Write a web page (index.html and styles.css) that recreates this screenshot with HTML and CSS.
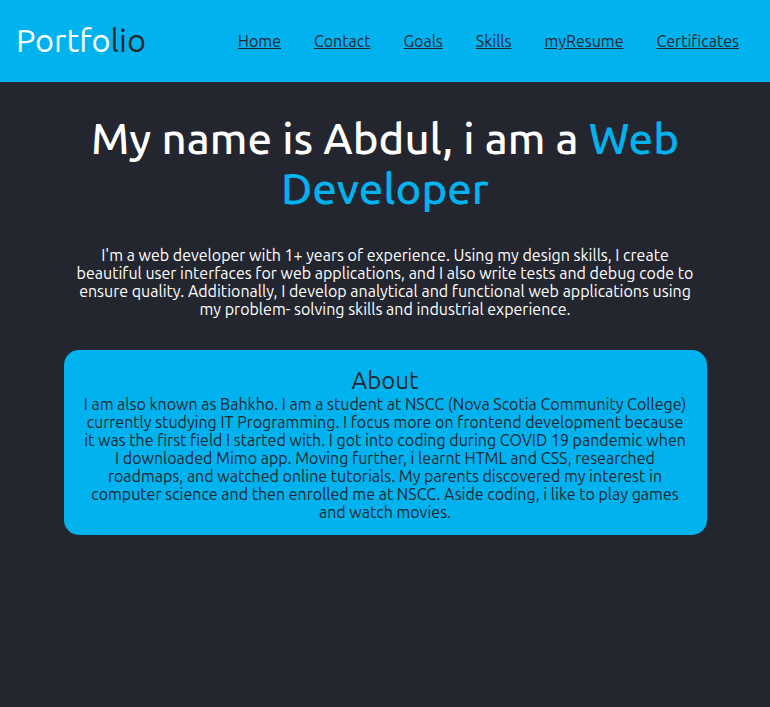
FILE: index.html
```html
<!DOCTYPE html>
<html lang="en">
<head>
<meta charset="utf-8">
<title>Portfolio</title>
<link rel="stylesheet" href="styles.css">
</head>
<body>
<header class="topbar">
  <div class="logo"><span class="logo-light">Portfo</span><span class="logo-dark">lio</span></div>
  <nav class="nav">
    <a href="#">Home</a>
    <a href="#">Contact</a>
    <a href="#">Goals</a>
    <a href="#">Skills</a>
    <a href="#">myResume</a>
    <a href="#">Certificates</a>
  </nav>
</header>
<main class="main">
  <h1 class="hero">My name is Abdul, i am a <span class="accent">Web</span> <span class="accent">Developer</span></h1>
  <p class="intro">I'm a web developer with 1+ years of experience. Using my design skills, I create beautiful user interfaces for web applications, and I also write tests and debug code to ensure quality. Additionally, I develop analytical and functional web applications using my problem- solving skills and industrial experience.</p>
  <section class="about">
    <h2 class="about-title">About</h2>
    <p class="about-text">I am also known as Bahkho. I am a student at NSCC (Nova Scotia Community College) currently studying IT Programming. I focus more on frontend development because it was the first field I started with. I got into coding during COVID 19 pandemic when I downloaded Mimo app. Moving further, i learnt HTML and CSS, researched roadmaps, and watched online tutorials. My parents discovered my interest in computer science and then enrolled me at NSCC. Aside coding, i like to play games and watch movies.</p>
  </section>
</main>
</body>
</html>
```
FILE: styles.css
```css
* { box-sizing: border-box; }
html, body { margin: 0; padding: 0; }
body {
  background: #23262e;
  color: #ffffff;
  font-family: "Ubuntu", "Lato", "Liberation Sans", sans-serif;
  min-height: 707px;
}
.topbar {
  background: #00b3ee;
  height: 82px;
  display: flex;
  align-items: center;
  justify-content: space-between;
  padding: 0 31px 0 16px;
}
.logo {
  font-size: 32.5px;
  line-height: 1;
  padding-bottom: 2px;
}
.logo-light { color: #ffffff; }
.logo-dark { color: #23262e; }
.nav {
  display: flex;
  gap: 33px;
  font-size: 16px;
}
.nav a {
  color: #23262e;
  text-decoration: underline;
}
.main {
  display: flex;
  flex-direction: column;
  align-items: center;
  padding-top: 31px;
}
.hero {
  margin: 0;
  font-size: 43.7px;
  line-height: 50px;
  font-weight: 500;
  text-align: center;
  max-width: 640px;
}
.accent { color: #00b3ee; }
.intro {
  margin: 33px 0 0;
  width: 630px;
  font-size: 16px;
  line-height: 18px;
  text-align: center;
}
.about {
  margin-top: 32px;
  width: 643px;
  background: #00b3ee;
  color: #23262e;
  border-radius: 15px;
  padding: 17px 19px 14px;
  text-align: center;
}
.about-title {
  margin: 0;
  font-size: 24px;
  line-height: 28px;
  font-weight: 400;
}
.about-text {
  margin: 0;
  font-size: 16px;
  line-height: 18px;
}
```
